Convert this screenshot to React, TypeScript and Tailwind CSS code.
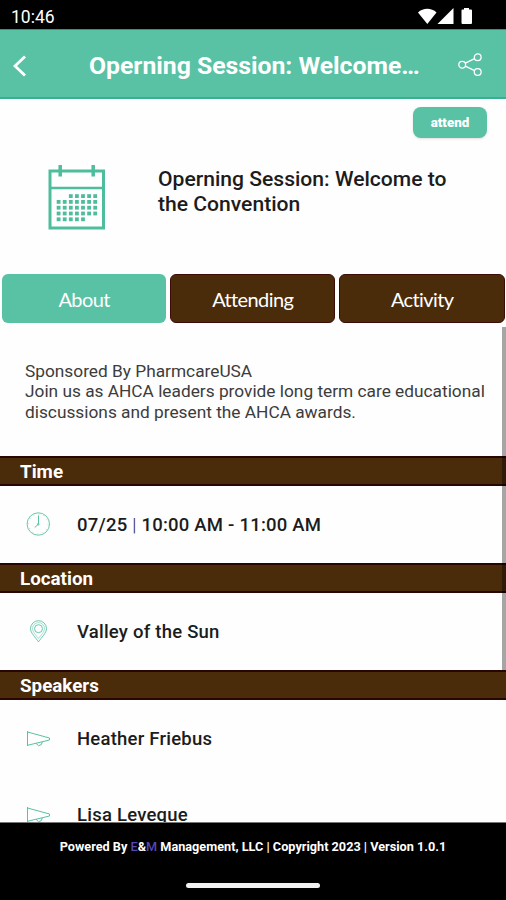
import type { ReactNode } from "react"

interface TabProps {
  label: string
  active?: boolean
}

const Tab = ({ label, active = false }: TabProps) => {
  return (
    <button
      className={`h-[49px] flex-1 rounded-md font-[Lato] text-[20px] tracking-[-0.6px] text-white ${
        active ? "bg-[#59c1a4]" : "border border-[#3b0c08] bg-[#4b2c0a]"
      }`}
    >
      {label}
    </button>
  )
}

const SectionTitle = ({ children }: { children: ReactNode }) => {
  return (
    <h2 className="flex h-[30px] items-center border-y-2 border-[#270604] bg-[#4b2c0a] pt-[3px] pl-5 text-[18.8px] font-bold text-white">
      {children}
    </h2>
  )
}

interface RowProps {
  icon: ReactNode
  children: ReactNode
}

const Row = ({ icon, children }: RowProps) => {
  return (
    <div className="flex h-[77px] items-center pl-[26px] text-[18.5px] font-medium tracking-[0.23px] text-[#1c1c1c]">
      <span className="w-[51px]">{icon}</span>
      <span className="pt-[3px]">{children}</span>
    </div>
  )
}

const CalendarIcon = () => {
  // column, first row and last row of the day squares
  const days = [
    [0, 1, 4],
    [1, 1, 4],
    [2, 0, 4],
    [3, 0, 4],
    [4, 0, 4],
    [5, 0, 3],
    [6, 0, 3],
  ]
  return (
    <svg width="57" height="65" viewBox="0 0 57 65" fill="none" stroke="#4dbd9c">
      <path d="M2 6h53.5v57h-53.5z" strokeWidth="3" />
      <path d="M2 23h54" strokeWidth="2.5" />
      <path d="M12.2 0v11.5M45.2 0v11.5" strokeWidth="3.5" />
      {days.map(([col, from, to]) =>
        [0, 1, 2, 3, 4]
          .filter((row) => row >= from && row <= to)
          .map((row) => (
            <rect
              key={`${col}-${row}`}
              x={8.7 + col * 6.1}
              y={29.2 + row * 5.8}
              width="3.8"
              height="3.8"
              fill="#4dbd9c"
              stroke="none"
            />
          ))
      )}
    </svg>
  )
}

const ShareIcon = () => {
  return (
    <svg width="25" height="24" viewBox="0 0 25 24" fill="none" stroke="white" strokeWidth="1.3">
      <circle cx="4.2" cy="11.7" r="3.4" />
      <circle cx="19.7" cy="4.3" r="3.4" />
      <circle cx="19.7" cy="19" r="3.4" />
      <path d="M7.3 10.2l9.3-4.5M7.3 13.1l9.3 4.5" />
    </svg>
  )
}

const ClockIcon = () => {
  return (
    <svg width="25" height="25" viewBox="0 0 25 25" fill="none" stroke="#59c1a4">
      <circle cx="12.3" cy="12" r="11.2" strokeWidth="0.9" />
      <circle cx="12.3" cy="12" r="9.8" strokeWidth="0.7" strokeDasharray="0.7 4.43" />
      <path d="M12.5 3.5v8.5l-3.8 3.6" />
      <circle cx="12.3" cy="12.2" r="0.8" />
    </svg>
  )
}

const PinIcon = () => {
  return (
    <svg width="25" height="23" viewBox="0 0 25 23" fill="none" stroke="#59c1a4" strokeWidth="0.9">
      <path d="M12.5 21.8C9.5 17.5 4.5 12.8 4.5 8.7a8 8 0 0 1 16 0c0 4.1-5 8.8-8 13.1z" />
      <path d="M12.5 18.5C10 15.2 6.5 11.8 6.5 8.6a6 6 0 0 1 12 0c0 3.2-3.5 6.6-6 9.9z" strokeWidth="0.5" />
      <circle cx="12.5" cy="8.7" r="4" />
    </svg>
  )
}

const HornIcon = () => {
  return (
    <svg width="25" height="16" viewBox="0 0 25 16" fill="none" stroke="#59c1a4">
      <path d="M1.5 0v15M1.5 1l22 6v2l-22 5.3" />
      <path d="M10 12.3l2.5 2.4 2.8-1 1-2.8" />
    </svg>
  )
}

const App = () => {
  return (
    <div className="flex h-[900px] w-[506px] flex-col overflow-hidden bg-[#fefefe] font-[Roboto,sans-serif]">
      <div className="flex h-[29px] shrink-0 items-center justify-between bg-black pt-[5px] pr-[33px] pl-[11px] text-white">
        <span className="text-[17.5px]">10:46</span>
        <svg className="-mt-0.5" width="55" height="17" viewBox="0 0 55 17" fill="white">
          <path d="M0 4.5C5-.5 13.5-.5 18.5 4.5L9.3 16z" />
          <path d="M35.5 0v16H19.5z" />
          <path d="M46 0h5v1.5h2q1 0 1 1V15q0 1-1 1h-8.5q-1 0-1-1V2.5q0-1 1-1H46z" />
        </svg>
      </div>

      <header className="flex h-[70px] shrink-0 items-center border-t border-b-2 border-t-[#3d8f78] border-b-[#36b090] bg-[#59c1a4] pr-[23px] pl-[13px] text-white">
        <svg className="mt-1" width="14" height="22" viewBox="0 0 14 22" fill="none" stroke="white" strokeWidth="2.8">
          <path d="M12 1.5L2 11l10 9.5" />
        </svg>
        <h1 className="mt-[5px] ml-[62px] w-[332px] text-[24.8px] font-bold tracking-[-0.03px] whitespace-nowrap">
          Operning Session: Welcome…
        </h1>
        <span className="mt-0.5 ml-auto">
          <ShareIcon />
        </span>
      </header>

      <div className="flex h-[39px] shrink-0 items-end justify-end pr-[19px]">
        <button className="h-[31px] w-[74px] rounded-lg bg-[#59c1a4] pt-px text-[13.4px] font-black text-white shadow">
          attend
        </button>
      </div>

      <div className="flex h-[136px] shrink-0 pt-[27px] pl-12">
        <CalendarIcon />
        <h2 className="mt-0.5 ml-[53px] w-[310px] text-[21.1px] leading-[24.5px] font-medium text-[#1c1c1c]">
          Operning Session: Welcome to the Convention
        </h2>
      </div>

      <nav className="flex shrink-0 gap-1 pr-px pl-[2.4px]">
        <Tab label="About" active />
        <Tab label="Attending" />
        <Tab label="Activity" />
      </nav>

      <main className="relative min-h-0 flex-1 overflow-hidden">
        <p className="h-[133px] pt-[38px] pl-[25px] text-[17.3px] leading-[20.3px] whitespace-nowrap text-[#3c3c3c]">
          Sponsored By PharmcareUSA
          <br />
          Join us as AHCA leaders provide long term care educational
          <br />
          discussions and present the AHCA awards.
        </p>
        <SectionTitle>Time</SectionTitle>
        <Row icon={<ClockIcon />}>
          07/25 <span className="font-light">|</span> 10:00 AM - 11:00 AM
        </Row>
        <SectionTitle>Location</SectionTitle>
        <Row icon={<PinIcon />}>Valley of the Sun</Row>
        <SectionTitle>Speakers</SectionTitle>
        <Row icon={<HornIcon />}>Heather Friebus</Row>
        <div className="-mt-px">
          <Row icon={<HornIcon />}>Lisa Leveque</Row>
        </div>
        <div className="absolute top-1 right-0 h-[343px] w-1 bg-black/35" />
      </main>

      <footer className="flex h-[78px] shrink-0 flex-col items-center justify-between border-t border-[#777] bg-black pt-[14px] pb-[12px] text-white">
        <p className="text-[12.7px] font-bold whitespace-nowrap">
          Powered By <span className="font-medium text-[#5548b8]">E</span>&
          <span className="font-medium text-[#5548b8]">M</span> Management, LLC | Copyright 2023 | Version
          1.0.1
        </p>
        <div className="h-[5px] w-[134px] rounded-full bg-[#f1f1f1]" />
      </footer>
    </div>
  )
}

export default App
